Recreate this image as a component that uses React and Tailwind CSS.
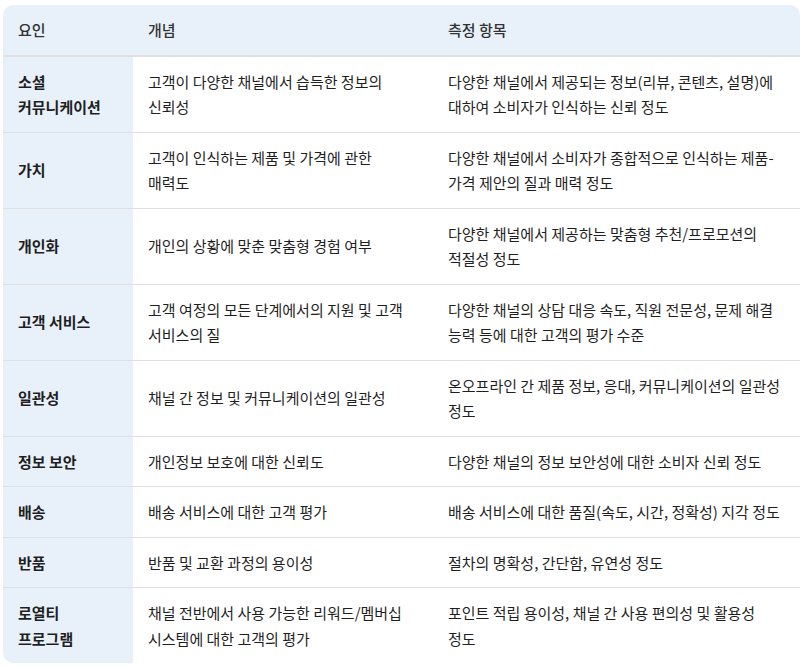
const rows = [
  {
    factor: ["소셜", "커뮤니케이션"],
    concept: "고객이 다양한 채널에서 습득한 정보의 신뢰성",
    measure: "다양한 채널에서 제공되는 정보(리뷰, 콘텐츠, 설명)에 대하여 소비자가 인식하는 신뢰 정도",
  },
  {
    factor: ["가치"],
    concept: "고객이 인식하는 제품 및 가격에 관한 매력도",
    measure: "다양한 채널에서 소비자가 종합적으로 인식하는 제품-가격 제안의 질과 매력 정도",
  },
  {
    factor: ["개인화"],
    concept: "개인의 상황에 맞춘 맞춤형 경험 여부",
    measure: "다양한 채널에서 제공하는 맞춤형 추천/프로모션의 적절성 정도",
  },
  {
    factor: ["고객 서비스"],
    concept: "고객 여정의 모든 단계에서의 지원 및 고객 서비스의 질",
    measure: "다양한 채널의 상담 대응 속도, 직원 전문성, 문제 해결 능력 등에 대한 고객의 평가 수준",
  },
  {
    factor: ["일관성"],
    concept: "채널 간 정보 및 커뮤니케이션의 일관성",
    measure: "온오프라인 간 제품 정보, 응대, 커뮤니케이션의 일관성 정도",
  },
  {
    factor: ["정보 보안"],
    concept: "개인정보 보호에 대한 신뢰도",
    measure: "다양한 채널의 정보 보안성에 대한 소비자 신뢰 정도",
  },
  {
    factor: ["배송"],
    concept: "배송 서비스에 대한 고객 평가",
    measure: "배송 서비스에 대한 품질(속도, 시간, 정확성) 지각 정도",
  },
  {
    factor: ["반품"],
    concept: "반품 및 교환 과정의 용이성",
    measure: "절차의 명확성, 간단함, 유연성 정도",
  },
  {
    factor: ["로열티", "프로그램"],
    concept: "채널 전반에서 사용 가능한 리워드/멤버십 시스템에 대한 고객의 평가",
    measure: "포인트 적립 용이성, 채널 간 사용 편의성 및 활용성 정도",
  },
];

const App = () => {
  return (
    <div
      className="bg-white w-[804px] h-[670px] pt-[5px] px-[3px]"
      style={{ fontFamily: '"Noto Sans CJK KR", "Noto Sans", sans-serif' }}
    >
      <div className="w-[797px] rounded-[10px] overflow-hidden text-[15px] leading-[25.5px] text-[#1f1f1f] break-keep">
        <div className="flex bg-[#e8f1fa] border-b-2 border-[#e0e0e0] font-medium text-[#333]">
          <div className="w-[130px] px-[15px] py-3">요인</div>
          <div className="w-[300px] px-[15px] py-3">개념</div>
          <div className="flex-1 px-[15px] py-3">측정 항목</div>
        </div>
        {rows.map((row, i) => (
          <div
            key={i}
            className={
              i < rows.length - 1
                ? "flex border-b border-[#e0e0e0]"
                : "flex"
            }
          >
            <div className="w-[130px] bg-[#e8f1fa] px-[15px] py-3 font-bold flex flex-col justify-center">
              {row.factor.map((f) => (
                <div key={f}>{f}</div>
              ))}
            </div>
            <div className="w-[300px] pl-[15px] pr-[25px] py-3 flex items-center">
              <div>{row.concept}</div>
            </div>
            <div className="flex-1 px-[15px] py-3 flex items-center">
              <div>{row.measure}</div>
            </div>
          </div>
        ))}
      </div>
    </div>
  );
};

export default App;
